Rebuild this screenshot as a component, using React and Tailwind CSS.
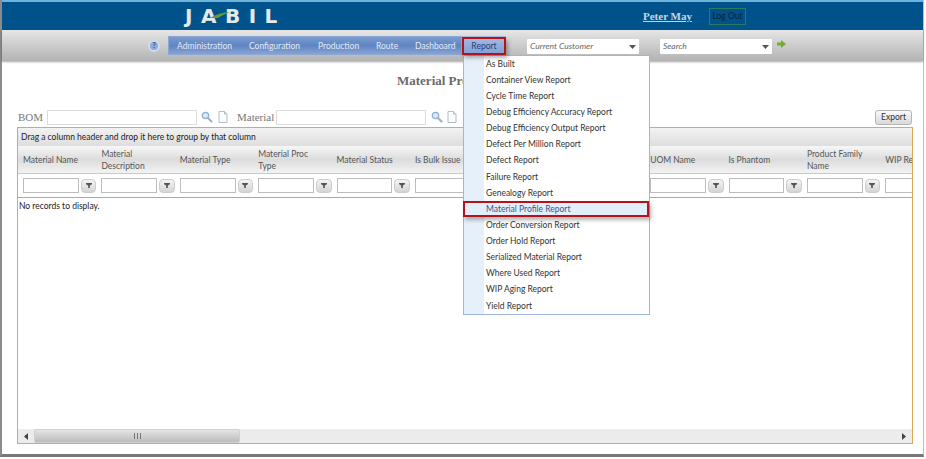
import React from 'react';

const navItems = ['Administration', 'Configuration', 'Production', 'Route', 'Dashboard'];
const navGaps = ['w-[72px]', 'w-[69px]', 'w-[58px]', 'w-[39px]', 'w-[56px]'];
const columns = [
    'Material Name', 'Material Description', 'Material Type', 'Material Proc Type', 'Material Status', 'Is Bulk Issue',
    '', '', 'UOM Name', 'Is Phantom', 'Product Family Name', 'WIP Report',
];
const reports = [
    'As Built', 'Container View Report', 'Cycle Time Report', 'Debug Efficiency Accuracy Report', 'Debug Efficiency Output Report',
    'Defect Per Million Report', 'Defect Report', 'Failure Report', 'Genealogy Report', 'Material Profile Report',
    'Order Conversion Report', 'Order Hold Report', 'Serialized Material Report', 'Where Used Report', 'WIP Aging Report', 'Yield Report',
];

function Lens() {
    return (
        <svg width="12" height="12" viewBox="0 0 12 12">
            <circle cx="4.5" cy="4.5" r="3.2" fill="#dbe8f5" stroke="#8fb0d0" strokeWidth="1.3" />
            <path d="M7 7l3.5 3.5" stroke="#9fb4c8" strokeWidth="2.200" strokeLinecap="round" />
        </svg>
    );
}

function Doc() {
    return (
        <svg width="10" height="12" viewBox="0 0 10 12">
            <path d="M1 .5h5.500L9 3v8.500H1z" fill="#fbfcfd" stroke="#b4bcc0" />
            <path d="M6.500 .5V3H9" fill="#e3e8ea" stroke="#b4bcc0" />
        </svg>
    );
}

function Combo({ label }) {
    return (
        <div className="w-[112px] h-[15px] mt-[2px] bg-white flex items-center justify-between pl-[3px] pr-[2px] rounded-[1px]">
            <span className="italic text-[8.5px] text-[#666]">{label}</span>
            <svg width="7" height="4" viewBox="0 0 7 4" className="mr-[1px]"><path d="M0 0h7L3.500 4z" fill="#555" /></svg>
        </div>
    );
}

function FilterCell() {
    return (
        <div className="w-[78.4px] shrink-0 flex items-center pl-[5px] gap-[1px]">
            <div className="w-[57px] h-[15px] bg-white border border-[#bdbdbd]" />
            <div className="w-[16px] h-[14px] ml-[1px] rounded-[4px] border border-[#cdcdcd] bg-gradient-to-b from-[#f4f4f4] to-[#d4d4d4] flex items-center justify-center">
                <svg width="6" height="5" viewBox="0 0 7 6"><path d="M0 0h7v1.500L4.500 3v3h-2V3L0 1.500z" fill="#555" /></svg>
            </div>
        </div>
    );
}

export default function App() {
    return (
        <div className="relative w-[926px] h-[459px] bg-white overflow-hidden text-[8.5px] text-[#333]" style={{ fontFamily: 'Lato, sans-serif' }}>
            <div className="w-[924px] h-[457px] border-l-2 border-r border-b-[3px] border-l-[#8b8b8b] border-r-[#bdbdbd] border-b-[#777] bg-white flex flex-col">
                <header className="relative h-[30px] shrink-0 bg-[#00528a] border-t-2 border-[#6fb2dc] flex items-center pl-[183px]">
                    <div className="w-[97px] text-[20px] leading-none font-bold tracking-[8.5px] text-[#e4e9ec] whitespace-nowrap" style={{ fontFamily: '"DejaVu Sans", sans-serif' }}>JABIL</div>
                    <svg width="20" height="6" viewBox="0 0 20 6" className="absolute left-[208px] top-[10px]"><path d="M0 6C6 2 13 .5 20 0c-5 2-9 4-12 6z" fill="#5f9a3c" /></svg>
                    <a className="ml-[361px] text-[11px] font-bold underline text-[#c9d6e0]" style={{ fontFamily: '"Liberation Serif", serif' }}>Peter May</a>
                    <div className="ml-[17px] w-[37px] h-[17px] border border-[#2e7a5e] text-[#0b2233] text-[8.5px] flex items-center justify-center">Log Out</div>
                </header>

                <div className="h-[31px] shrink-0 bg-gradient-to-b from-[#e6e6e6] to-[#b3b3b3] flex items-center pl-[146px] shadow-[0_1px_2px_rgba(0,0,0,0.35)]">
                    <div className="w-[12px] h-[12px] mr-[8px] rounded-full bg-[#8fa9dc] border-2 border-[#cfdbf0] flex items-center justify-center text-[7px] font-bold text-[#2b4f90]">?</div>
                    <nav className="w-[294px] h-[19px] bg-gradient-to-b from-[#7b9bd0] via-[#5f85c2] to-[#87a3d3] border border-[#8ea8d4] flex items-center pl-[8px] text-[#e3ebf7]">
                        {navItems.map((n, i) => (
                            <span key={n} className={`${navGaps[i]} shrink-0 text-[8.5px] pt-[1px]`}>{n}</span>
                        ))}
                    </nav>
                    <div className="w-[44px] h-[19px] pt-[1px] bg-gradient-to-b from-[#a9bde0] to-[#7f9ed4] text-[#1f3f7c] flex items-center justify-center">Report</div>
                    <div className="ml-[21px]"><Combo label="Current Customer" /></div>
                    <div className="ml-[21px]"><Combo label="Search" /></div>
                    <svg width="9" height="8" viewBox="0 0 9 8" className="ml-[5px] mb-[3px]"><path d="M0 2.500h4V0l5 4-5 4V5.500H0z" fill="#6fae2e" /></svg>
                </div>

                <main className="flex-1 flex flex-col pl-[15px] min-h-0">
                    <h1 className="mt-[12px] h-[15px] pl-[380px] text-[13px] leading-[15px] font-bold text-[#6b6b6b] whitespace-nowrap" style={{ fontFamily: '"Liberation Serif", serif' }}>Material Profile Report</h1>

                    <div className="mt-[21px] w-[896px] h-[16px] flex items-center text-[11px] text-[#777]" style={{ fontFamily: '"Liberation Serif", serif' }}>
                        <span className="pl-[1px] w-[30px]">BOM</span>
                        <div className="w-[150px] h-[15px] border border-[#dcdcdc] bg-white" />
                        <div className="ml-[4px] w-[12px]"><Lens /></div>
                        <div className="ml-[5px] w-[10px]"><Doc /></div>
                        <span className="ml-[9px] w-[39px]">Material</span>
                        <div className="w-[150px] h-[15px] border border-[#dcdcdc] bg-white" />
                        <div className="ml-[5px] w-[12px]"><Lens /></div>
                        <div className="ml-[4px] w-[10px]"><Doc /></div>
                        <div className="ml-auto mr-[1px] w-[37px] h-[15px] rounded-[3px] border border-[#b5b5b5] bg-gradient-to-b from-[#fafafa] to-[#d9d9d9] text-[8.5px] text-[#333] flex items-center justify-center" style={{ fontFamily: 'Lato, sans-serif' }}>Export</div>
                    </div>

                    <section className="mt-[2px] w-[896px] h-[317px] border border-[#e0a84e] flex flex-col overflow-hidden">
                        <div className="h-[18px] shrink-0 bg-gradient-to-b from-[#f2f2f2] to-[#dedede] flex items-center pl-[3px] text-[#222]">Drag a column header and drop it here to group by that column</div>
                        <div className="h-[28px] shrink-0 flex bg-gradient-to-b from-[#f7f7f7] via-[#dcdcdc] to-[#f3f3f3] border-b border-[#c9c9c9]">
                            {columns.map((c, i) => (
                                <div key={i} className="w-[78.4px] shrink-0 pl-[5px] pr-[6px] flex items-center leading-[12px] text-[#555] overflow-hidden">{c}</div>
                            ))}
                        </div>
                        <div className="h-[24px] shrink-0 flex border-b border-[#a9a9a9] bg-white">
                            {columns.map((c, i) => <FilterCell key={i} />)}
                        </div>
                        <div className="flex-1 pl-[1px] pt-[2px] text-[#222]">No records to display.</div>
                        <div className="h-[14px] shrink-0 bg-[#ececec] flex items-center">
                            <div className="w-[16px] flex justify-center">
                                <svg width="4" height="7" viewBox="0 0 4 7"><path d="M4 0v7L0 3.500z" fill="#444" /></svg>
                            </div>
                            <div className="w-[206px] h-[14px] bg-gradient-to-b from-[#e4e4e4] to-[#bdbdbd] border border-[#d0d0d0] rounded-[2px] flex items-center justify-center gap-[1px]">
                                <span className="w-[1px] h-[6px] bg-[#777]" />
                                <span className="w-[1px] h-[6px] bg-[#777] ml-[1px]" />
                                <span className="w-[1px] h-[6px] bg-[#777] ml-[1px]" />
                            </div>
                            <div className="ml-auto w-[16px] flex justify-center">
                                <svg width="4" height="7" viewBox="0 0 4 7"><path d="M0 0v7l4-3.500z" fill="#444" /></svg>
                            </div>
                        </div>
                    </section>
                </main>
            </div>

            {/* report dropdown */}
            <div className="absolute left-[463px] top-[55px] w-[187px] h-[260px] bg-white border border-[#9db6dc] flex">
                <div className="w-[20px] bg-[#e6f0fb]" />
                <ul className="flex-1 text-[8.5px] text-[#333]">
                    {reports.map(r => (
                        <li key={r} className={`h-[16.13px] flex items-center -ml-[20px] pl-[22px] whitespace-nowrap ${r === 'Material Profile Report' ? 'bg-[#e3eefb] text-[#3f5488]' : ''}`}>{r}</li>
                    ))}
                </ul>
            </div>

            {/* red callouts */}
            <div className="absolute left-[462px] top-[37px] w-[44px] h-[18px] border-2 border-[#b5121b] shadow-[2px_3px_4px_rgba(0,0,0,0.3)]" />
            <div className="absolute left-[463px] top-[201px] w-[186px] h-[16px] border-2 border-[#b5121b] shadow-[2px_3px_4px_rgba(0,0,0,0.3)]" />
        </div>
    );
}
